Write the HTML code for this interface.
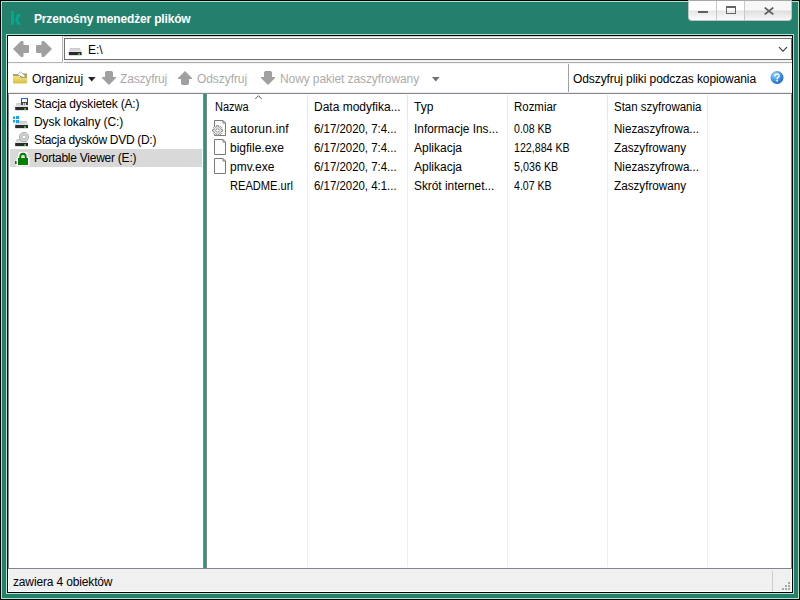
<!DOCTYPE html>
<html><head><meta charset="utf-8">
<style>
*{margin:0;padding:0;box-sizing:border-box}
html,body{width:800px;height:600px;overflow:hidden;background:#000}
body{position:relative;font-family:"Liberation Sans",sans-serif;font-size:12px;color:#000}
.a{position:absolute}
.t{position:absolute;white-space:nowrap;line-height:12px;font-size:12px}
.dis{color:#ababab}
.vs{position:absolute;width:1px;background:#e9eff8}
.hs{position:absolute;width:1px;background:#e5e5e5}
</style></head><body>
<!-- outer frame -->
<div class="a" style="left:1px;top:1px;width:798px;height:598px;background:#a6e9d2"></div>
<div class="a" style="left:2px;top:2px;width:796px;height:596px;background:#24806c"></div>
<!-- inner frame -->
<div class="a" style="left:6px;top:34px;width:788px;height:560px;background:#a6e9d2"></div>
<div class="a" style="left:7px;top:35px;width:786px;height:558px;background:#000"></div>
<div class="a" style="left:8px;top:36px;width:784px;height:556px;background:#fff"></div>

<!-- title -->
<svg class="a" style="left:11px;top:11px" width="12" height="15" viewBox="0 0 12 15">
 <rect x="0" y="0" width="3" height="13.8" fill="#00a88e"/>
 <path d="M6.3 3H10L6.9 8.4L10 13.8H6.3L4 8.4Z" fill="#00a88e"/>
</svg>
<div id="t1" class="t" style="left:34px;top:13px;color:#fff;font-weight:bold;letter-spacing:-0.17px">Przenośny menedżer plików</div>

<!-- window buttons -->
<div class="a" style="left:688px;top:0;width:104px;height:21px;border:1px solid #c4c4c4;border-top-color:#a8a8a8;border-radius:0 0 4px 4px;background:linear-gradient(#fff 0,#fff 9px,#e6e6e6 10px,#fdfdfd 19px);overflow:hidden">
  <div class="a" style="left:27px;top:0;width:1px;height:20px;background:#c8c8c8"></div>
  <div class="a" style="left:55px;top:0;width:1px;height:20px;background:#c8c8c8"></div>
  <div class="a" style="left:56px;top:0;width:47px;height:20px;background:linear-gradient(#f7f7f7 0,#f7f7f7 9px,#dedede 10px,#f8f8f8 19px)"></div>
</div>
<div class="a" style="left:698px;top:11px;width:10px;height:2px;background:#606060"></div>
<div class="a" style="left:726px;top:6px;width:10px;height:8px;border:1px solid #666;border-top-width:2px"></div>
<svg class="a" style="left:764px;top:7px" width="10" height="8" viewBox="0 0 10 8"><path d="M0.7 0.6L9.3 7.4M9.3 0.6L0.7 7.4" stroke="#5c5c5c" stroke-width="1.7"/></svg>

<!-- nav bar -->
<svg class="a" style="left:13px;top:41px" width="17" height="17" viewBox="0 0 17 17">
  <path d="M0 8L8 0H9.5Q10.5 0 10.5 1V4H15Q16 4 16 5V11Q16 12 15 12H10.5V15Q10.5 16 9.5 16H8Z" fill="#a0a0a0"/>
</svg>
<svg class="a" style="left:36px;top:41px" width="17" height="17" viewBox="0 0 17 17">
  <path d="M16 8L8 0H6.5Q5.5 0 5.5 1V4H1Q0 4 0 5V11Q0 12 1 12H5.5V15Q5.5 16 6.5 16H8Z" fill="#a0a0a0"/>
</svg>
<div class="a" style="left:62px;top:36px;width:1px;height:27px;background:#b4b4b4"></div>
<div class="a" style="left:8px;top:62px;width:55px;height:1px;background:#b4b4b4"></div>
<div class="a" style="left:64px;top:62px;width:728px;height:1px;background:#aaaaaa"></div>
<div class="a" style="left:8px;top:63px;width:784px;height:1px;background:#f4f7fb"></div>
<div class="a" style="left:64px;top:36px;width:728px;height:1px;background:#d2d2d2"></div>
<div class="a" style="left:64px;top:60px;width:728px;height:2px;background:#f5f5f5"></div>
<div class="a" style="left:63px;top:36px;width:1px;height:27px;background:#f4f8fc"></div>
<div class="a" style="left:64px;top:38px;width:728px;height:22px;border:1px solid #707070;background:#fff"></div>
<!-- drive icon in address -->
<svg class="a" style="left:68px;top:48px" width="15" height="8" viewBox="0 0 15 8">
  <defs><linearGradient id="dt" x1="0" y1="0" x2="0" y2="1"><stop offset="0" stop-color="#c4c6ca"/><stop offset="1" stop-color="#e6e7ea"/></linearGradient></defs>
  <path d="M1.8 0H12L13.6 4H0.8Z" fill="url(#dt)"/>
  <rect x="0.8" y="4" width="12.8" height="3" fill="#2a2a2a"/>
  <rect x="0.8" y="7" width="12.8" height="1" fill="#dcdcdc"/>
  <rect x="10.2" y="5.2" width="1.7" height="1.7" fill="#48e048"/>
</svg>
<div id="t2" class="t" style="left:88px;top:44px">E:\</div>
<svg class="a" style="left:778px;top:46px" width="10" height="7" viewBox="0 0 10 7"><path d="M1 1.2L5 5.2L9 1.2" fill="none" stroke="#444" stroke-width="1.2"/></svg>

<!-- toolbar -->
<svg class="a" style="left:13px;top:71px" width="14" height="13" viewBox="0 0 14 13">
  <defs><linearGradient id="fg" x1="0" y1="0" x2="0" y2="1"><stop offset="0" stop-color="#f2e47c"/><stop offset="1" stop-color="#d6be46"/></linearGradient></defs>
  <path d="M0 3H5.5L6 2.5H14V12H0Z" fill="#b4a44c"/>
  <path d="M4.2 4L7.5 0.8L12.5 5.2L11 6.5Z" fill="#fff" stroke="#8090b0" stroke-width="0.7"/>
  <path d="M0 5H6.5L8 7H14V11.6Q14 12.6 13 12.6H1Q0 12.6 0 11.6Z" fill="url(#fg)"/>
</svg>
<div id="t3" class="t" style="left:32px;top:73px;color:#000;letter-spacing:-0.025px">Organizuj</div>
<svg class="a" style="left:88px;top:77px" width="8" height="5" viewBox="0 0 8 5"><path d="M0 0H7.5L3.75 4.5Z" fill="#222"/></svg>
<svg class="a" style="left:102px;top:71px" width="15" height="15" viewBox="0 0 15 15">
  <path d="M4.2 0H9.8L11 1.2V6H14V7L7 14L0 7V6H3V1.2Z" fill="#a0a0a0"/>
</svg>
<div id="t4" class="t dis" style="left:120px;top:73px;letter-spacing:-0.175px">Zaszyfruj</div>
<svg class="a" style="left:178px;top:71px" width="15" height="15" viewBox="0 0 15 15">
  <path d="M4.2 14H9.8L11 12.8V8H14V7L7 0L0 7V8H3V12.8Z" fill="#a0a0a0"/>
</svg>
<div id="t5" class="t dis" style="left:197px;top:73px;letter-spacing:-0.075px">Odszyfruj</div>
<svg class="a" style="left:261px;top:71px" width="15" height="15" viewBox="0 0 15 15">
  <path d="M4.2 0H9.8L11 1.2V6H14V7L7 14L0 7V6H3V1.2Z" fill="#a0a0a0"/>
</svg>
<div id="t6" class="t dis" style="left:280px;top:73px;letter-spacing:-0.097px">Nowy pakiet zaszyfrowany</div>
<svg class="a" style="left:432px;top:77px" width="8" height="5" viewBox="0 0 8 5"><path d="M0 0H7.5L3.75 4.5Z" fill="#707070"/></svg>
<div class="a" style="left:568px;top:64px;width:1px;height:29px;background:#a0a0a0"></div>
<div id="t7" class="t" style="left:573px;top:73px;letter-spacing:-0.09px">Odszyfruj pliki podczas kopiowania</div>
<svg class="a" style="left:770px;top:71px" width="14" height="14" viewBox="0 0 14 14">
  <defs><radialGradient id="hg" cx="0.35" cy="0.3" r="0.8"><stop offset="0" stop-color="#9ad4fa"/><stop offset="0.55" stop-color="#3f95e4"/><stop offset="1" stop-color="#1b56b4"/></radialGradient></defs>
  <circle cx="7" cy="6.5" r="6.5" fill="url(#hg)"/>
  <path d="M4.9 5.2Q5 3 7.1 3Q9.2 3.1 9.1 4.9Q9 6 7.9 6.6Q7.1 7.1 7.1 8.2" fill="none" stroke="#fff" stroke-width="1.4"/>
  <rect x="6.3" y="8.9" width="1.6" height="1.6" fill="#fff"/>
</svg>
<div class="a" style="left:8px;top:92px;width:784px;height:1px;background:#ececec"></div>
<div class="a" style="left:8px;top:93px;width:784px;height:1px;background:#82878f"></div>

<!-- splitter -->
<div class="a" style="left:8px;top:94px;width:1px;height:474px;background:#82878f"></div>
<div class="a" style="left:791px;top:94px;width:1px;height:474px;background:#82878f"></div>
<div class="a" style="left:203px;top:94px;width:4px;height:474px;background:#82878f"></div>
<div class="a" style="left:204px;top:94px;width:2px;height:474px;background:#22997b"></div>

<!-- tree -->
<div class="a" style="left:10px;top:149px;width:192px;height:18px;background:#d9d9d9"></div>
<!-- floppy drive -->
<svg class="a" style="left:15px;top:103px" width="14" height="8" viewBox="0 0 14 8">
  <path d="M1.6 0H11.6L13 4H0.2Z" fill="url(#dt)"/>
  <rect x="0.2" y="4" width="12.8" height="3" fill="#2a2a2a"/>
  <rect x="0.2" y="7" width="12.8" height="1" fill="#e0e0e0"/>
  <rect x="9.2" y="5.2" width="1.7" height="1.7" fill="#48e048"/>
</svg>
<svg class="a" style="left:21px;top:98px" width="7" height="7" viewBox="0 0 7 7">
  <rect x="0" y="0" width="7" height="7" rx="0.5" fill="#474747"/>
  <rect x="0" y="0" width="7" height="1" fill="#1f6fd0"/>
  <rect x="1" y="1" width="5" height="3" fill="#f4f4f4"/>
  <rect x="2" y="5" width="3" height="2" fill="#d8d8d8"/>
  <rect x="3" y="5.5" width="1" height="1" fill="#333"/>
</svg>
<div id="t8" class="t" style="left:34px;top:98px;letter-spacing:-0.200px">Stacja dyskietek (A:)</div>
<svg class="a" style="left:15px;top:121px" width="14" height="8" viewBox="0 0 14 8">
  <path d="M1.6 0H11.6L13 4H0.2Z" fill="url(#dt)"/>
  <rect x="0.2" y="4" width="12.8" height="3" fill="#2a2a2a"/>
  <rect x="0.2" y="7" width="12.8" height="1" fill="#e0e0e0"/>
  <rect x="9.2" y="5.2" width="1.7" height="1.7" fill="#48e048"/>
</svg>
<svg class="a" style="left:13px;top:116px" width="6" height="7" viewBox="0 0 6 7">
  <rect x="0" y="0.5" width="2" height="2.5" fill="#12a6ef"/>
  <rect x="3" y="0" width="3" height="3" fill="#12a6ef"/>
  <rect x="0" y="4" width="2" height="2.5" fill="#12a6ef"/>
  <rect x="3" y="4" width="3" height="3" fill="#12a6ef"/>
</svg>
<div id="t9" class="t" style="left:34px;top:116px;letter-spacing:-0.087px">Dysk lokalny (C:)</div>
<svg class="a" style="left:15px;top:139px" width="14" height="8" viewBox="0 0 14 8">
  <path d="M1.6 0H11.6L13 4H0.2Z" fill="url(#dt)"/>
  <rect x="0.2" y="4" width="12.8" height="3" fill="#2a2a2a"/>
  <rect x="0.2" y="7" width="12.8" height="1" fill="#e0e0e0"/>
  <rect x="9.2" y="5.2" width="1.7" height="1.7" fill="#48e048"/>
</svg>
<svg class="a" style="left:19px;top:132px" width="10" height="10" viewBox="0 0 10 10">
  <circle cx="5" cy="5" r="4.6" fill="#d6dada" stroke="#9a9a9a" stroke-width="0.8"/>
  <circle cx="5" cy="5" r="2.2" fill="none" stroke="#9a9a9a" stroke-width="0.8"/>
  <rect x="3.8" y="3.8" width="2.4" height="2.4" fill="#fff"/>
</svg>
<div id="t10" class="t" style="left:34px;top:134px;letter-spacing:-0.3px">Stacja dysków DVD (D:)</div>
<svg class="a" style="left:15px;top:157px" width="14" height="8" viewBox="0 0 14 8">
  <path d="M1.6 0H11.6L13 4H0.2Z" fill="url(#dt)"/>
  <rect x="0.2" y="4" width="12.8" height="3" fill="#2a2a2a"/>
  <rect x="0.2" y="7" width="12.8" height="1" fill="#e0e0e0"/>
  <rect x="9.2" y="5.2" width="1.7" height="1.7" fill="#48e048"/>
</svg>
<svg class="a" style="left:16px;top:152px" width="14" height="15" viewBox="0 0 14 15">
  <path d="M4 7V4.5Q4 0.6 7 0.6Q10 0.6 10 4.5V7" fill="none" stroke="#fff" stroke-width="4"/>
  <rect x="0.5" y="5" width="13" height="9.5" rx="1" fill="#fff"/>
  <path d="M4.3 6.5V4.8Q4.3 1.7 7 1.7Q9.7 1.7 9.7 4.8V6.5" fill="none" stroke="#008000" stroke-width="2"/>
  <rect x="2" y="6" width="10" height="7" fill="#008000"/>
</svg>
<div id="t11" class="t" style="left:34px;top:152px;letter-spacing:-0.247px">Portable Viewer (E:)</div>

<!-- list header -->
<svg class="a" style="left:255px;top:95px" width="8" height="5" viewBox="0 0 8 5"><path d="M0.3 4L3.5 0.7L6.7 4" fill="none" stroke="#5a5a5a" stroke-width="1"/></svg>
<div id="t12" class="t" style="left:215px;top:101px;transform:scaleX(0.9167);transform-origin:0 0">Nazwa</div>
<div id="t13" class="t" style="left:314px;top:101px;transform:scaleX(1.0000);transform-origin:0 0">Data modyfika...</div>
<div id="t14" class="t" style="left:414px;top:101px;transform:scaleX(1.0000);transform-origin:0 0">Typ</div>
<div id="t15" class="t" style="left:514px;top:101px;transform:scaleX(0.9545);transform-origin:0 0">Rozmiar</div>
<div id="t16" class="t" style="left:614px;top:101px;transform:scaleX(0.9560);transform-origin:0 0">Stan szyfrowania</div>
<div class="hs" style="left:307px;top:95px;height:24px"></div>
<div class="hs" style="left:407px;top:95px;height:24px"></div>
<div class="hs" style="left:507px;top:95px;height:24px"></div>
<div class="hs" style="left:607px;top:95px;height:24px"></div>
<div class="hs" style="left:707px;top:95px;height:24px"></div>
<div class="vs" style="left:307px;top:119px;height:448px"></div>
<div class="vs" style="left:407px;top:119px;height:448px"></div>
<div class="vs" style="left:507px;top:119px;height:448px"></div>
<div class="vs" style="left:607px;top:119px;height:448px"></div>
<div class="vs" style="left:707px;top:119px;height:448px"></div>

<!-- rows -->
<svg class="a" style="left:214px;top:120px" width="12" height="16" viewBox="0 0 12 16">
  <path d="M0.5 0.5H9L11.5 3V15.5H0.5Z" fill="#fdfdfd" stroke="#7a7a7a" stroke-width="1"/>
  <path d="M9 0.5V3H11.5" fill="none" stroke="#7a7a7a" stroke-width="1"/>
</svg>
<svg class="a" style="left:212px;top:125px" width="11" height="11" viewBox="0 0 11 11">
  <path d="M9.07 4.51 L10.43 4.64 L10.43 6.36 L9.07 6.49 L8.72 7.32 L9.59 8.38 L8.38 9.59 L7.32 8.72 L6.49 9.07 L6.36 10.43 L4.64 10.43 L4.51 9.07 L3.68 8.72 L2.62 9.59 L1.41 8.38 L2.28 7.32 L1.93 6.49 L0.57 6.36 L0.57 4.64 L1.93 4.51 L2.28 3.68 L1.41 2.62 L2.62 1.41 L3.68 2.28 L4.51 1.93 L4.64 0.57 L6.36 0.57 L6.49 1.93 L7.32 2.28 L8.38 1.41 L9.59 2.62 L8.72 3.68Z" fill="#e6e8ea" stroke="#858585" stroke-width="0.9" stroke-linejoin="round"/>
  <circle cx="5.5" cy="5.5" r="1.7" fill="#fff" stroke="#858585" stroke-width="0.8"/>
</svg>
<svg class="a" style="left:214px;top:139px" width="12" height="16" viewBox="0 0 12 16">
  <path d="M0.5 0.5H9L11.5 3V15.5H0.5Z" fill="#fdfdfd" stroke="#7a7a7a" stroke-width="1"/>
  <path d="M9 0.5V3H11.5" fill="none" stroke="#7a7a7a" stroke-width="1"/>
</svg>
<svg class="a" style="left:214px;top:158px" width="12" height="16" viewBox="0 0 12 16">
  <path d="M0.5 0.5H9L11.5 3V15.5H0.5Z" fill="#fdfdfd" stroke="#7a7a7a" stroke-width="1"/>
  <path d="M9 0.5V3H11.5" fill="none" stroke="#7a7a7a" stroke-width="1"/>
</svg>
<div id="t17" class="t" style="left:230px;top:123px;letter-spacing:0.200px">autorun.inf</div>
<div id="t18" class="t" style="left:230px;top:142px">bigfile.exe</div>
<div id="t19" class="t" style="left:230px;top:161px">pmv.exe</div>
<div id="t20" class="t" style="left:230px;top:180px;transform:scaleX(0.9254);transform-origin:0 0">README.url</div>
<div id="t21" class="t" style="left:314px;top:123px;transform:scaleX(0.9529);transform-origin:0 0">6/17/2020, 7:4...</div>
<div id="t22" class="t" style="left:314px;top:142px;transform:scaleX(0.9529);transform-origin:0 0">6/17/2020, 7:4...</div>
<div id="t23" class="t" style="left:314px;top:161px;transform:scaleX(0.9529);transform-origin:0 0">6/17/2020, 7:4...</div>
<div id="t24" class="t" style="left:314px;top:180px;transform:scaleX(0.9529);transform-origin:0 0">6/17/2020, 4:1...</div>
<div id="t25" class="t" style="left:414px;top:123px;transform:scaleX(0.9881);transform-origin:0 0">Informacje Ins...</div>
<div id="t26" class="t" style="left:414px;top:142px;transform:scaleX(1.0000);transform-origin:0 0">Aplikacja</div>
<div id="t27" class="t" style="left:414px;top:161px;transform:scaleX(1.0000);transform-origin:0 0">Aplikacja</div>
<div id="t28" class="t" style="left:414px;top:180px;transform:scaleX(0.9875);transform-origin:0 0">Skrót internet...</div>
<div id="t29" class="t" style="left:514px;top:123px;transform:scaleX(0.8810);transform-origin:0 0">0.08 KB</div>
<div id="t30" class="t" style="left:514px;top:142px;transform:scaleX(0.8871);transform-origin:0 0">122,884 KB</div>
<div id="t31" class="t" style="left:514px;top:161px;transform:scaleX(0.8958);transform-origin:0 0">5,036 KB</div>
<div id="t32" class="t" style="left:514px;top:180px;transform:scaleX(0.8810);transform-origin:0 0">4.07 KB</div>
<div id="t33" class="t" style="left:614px;top:123px;transform:scaleX(0.9656);transform-origin:0 0">Niezaszyfrowa...</div>
<div id="t34" class="t" style="left:614px;top:142px;transform:scaleX(0.9730);transform-origin:0 0">Zaszyfrowany</div>
<div id="t35" class="t" style="left:614px;top:161px;transform:scaleX(0.9656);transform-origin:0 0">Niezaszyfrowa...</div>
<div id="t36" class="t" style="left:614px;top:180px;transform:scaleX(0.9730);transform-origin:0 0">Zaszyfrowany</div>

<!-- status bar -->
<div class="a" style="left:8px;top:568px;width:784px;height:1px;background:#82878f"></div>
<div class="a" style="left:9px;top:569px;width:782px;height:22px;background:#f0f0f0"></div>
<div class="a" style="left:772px;top:571px;width:1px;height:20px;background:#cdcdcd"></div>
<div id="t37" class="t" style="left:13px;top:576px;letter-spacing:-0.15px">zawiera 4 obiektów</div>
<div class="a" style="left:788px;top:582px;width:2px;height:2px;background:#a8a8a8"></div>
<div class="a" style="left:785px;top:585px;width:2px;height:2px;background:#a8a8a8"></div>
<div class="a" style="left:788px;top:585px;width:2px;height:2px;background:#a8a8a8"></div>
<div class="a" style="left:782px;top:588px;width:2px;height:2px;background:#a8a8a8"></div>
<div class="a" style="left:785px;top:588px;width:2px;height:2px;background:#a8a8a8"></div>
<div class="a" style="left:788px;top:588px;width:2px;height:2px;background:#a8a8a8"></div>
</body></html>
